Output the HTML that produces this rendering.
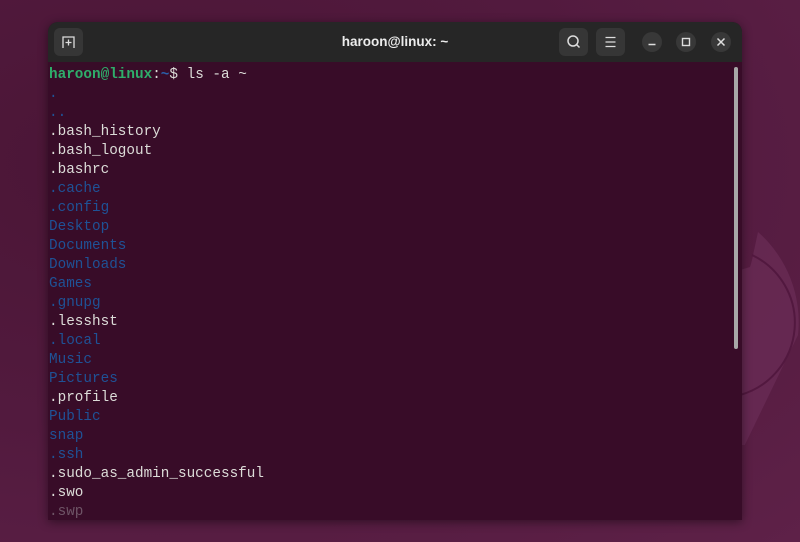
<!DOCTYPE html>
<html><head><style>
html,body{margin:0;padding:0;width:800px;height:542px;overflow:hidden}
body{background:radial-gradient(ellipse at 20% 30%,#4a1535 0%,#521a3e 50%,#5e2148 100%);position:relative;font-family:"Liberation Sans",sans-serif}
.win{position:absolute;left:48px;top:22px;width:694px;height:498px;border-radius:10px 10px 0 0;overflow:hidden;box-shadow:0 2px 10px rgba(0,0,0,.45);background:#380c28}
.hdr{height:40px;background:#262626;position:relative}
.title{position:absolute;left:0;right:0;top:12px;text-align:center;color:#ececec;font-weight:bold;font-size:13.5px}
.btn{position:absolute;top:6px;width:29px;height:28px;background:#363636;border-radius:6px}
.cbtn{position:absolute;top:10px;width:20px;height:20px;background:#383838;border-radius:50%}
.term{position:absolute;left:1px;top:44px;font-family:"Liberation Mono",monospace;font-size:14.33px;line-height:19px;color:#dcdcd8;white-space:pre}
.b{color:#1f5296}.g{color:#2fad6a;font-weight:bold}.bl{color:#2a5fa8}
.sb{position:absolute;left:686px;top:45px;width:4px;height:282px;background:#a8a8a8;border-radius:2px}
</style></head><body>
<svg style="position:absolute;left:740px;top:225px" width="60" height="220" viewBox="0 0 60 220"><path d="M18 7 A120 120 0 0 1 58 110 L0 230 L0 45 L10 42 A60 60 0 0 0 12 35 Z" fill="#6a2c55" opacity=".75"/><path d="M12 30 A75 75 0 0 1 0 170" stroke="#52183f" stroke-width="2" fill="none"/></svg>
<div class="win">
<div class="hdr">
<div class="btn" style="left:6px"><svg width="29" height="28"><path d="M9 20V9h11v11M14.5 11.5v6M11.5 14.5h6" stroke="#ddd" stroke-width="1.3" fill="none"/></svg></div>
<div class="title">haroon@linux: ~</div>
<div class="btn" style="left:511px"><svg width="29" height="28"><circle cx="14" cy="13" r="5" stroke="#ddd" stroke-width="1.5" fill="none"/><path d="M17.5 16.5l3 3" stroke="#ddd" stroke-width="1.5"/></svg></div>
<div class="btn" style="left:548px"><svg width="29" height="28"><path d="M9.5 9.5h10M9.5 14h10M9.5 18.5h10" stroke="#ddd" stroke-width="1.3"/></svg></div>
<div class="cbtn" style="left:594px"><svg width="20" height="20"><path d="M6.5 12.5h7" stroke="#ddd" stroke-width="1.4"/></svg></div>
<div class="cbtn" style="left:628px"><svg width="20" height="20"><rect x="6.5" y="6.5" width="7" height="7" stroke="#ddd" stroke-width="1.4" fill="none"/></svg></div>
<div class="cbtn" style="left:663px"><svg width="20" height="20"><path d="M6.5 6.5l7 7M13.5 6.5l-7 7" stroke="#ddd" stroke-width="1.5"/></svg></div>
</div>
<div class="term"><span class="g">haroon@linux</span>:<span class="bl" style="font-weight:bold">~</span>$ ls -a ~
<span class="b">.</span>
<span class="b">..</span>
.bash_history
.bash_logout
.bashrc
<span class="b">.cache</span>
<span class="b">.config</span>
<span class="b">Desktop</span>
<span class="b">Documents</span>
<span class="b">Downloads</span>
<span class="b">Games</span>
<span class="b">.gnupg</span>
.lesshst
<span class="b">.local</span>
<span class="b">Music</span>
<span class="b">Pictures</span>
.profile
<span class="b">Public</span>
<span class="b">snap</span>
<span class="b">.ssh</span>
.sudo_as_admin_successful
.swo
<span style="color:#6e5466">.swp</span></div>
<div class="sb"></div>
</div>
</body></html>
